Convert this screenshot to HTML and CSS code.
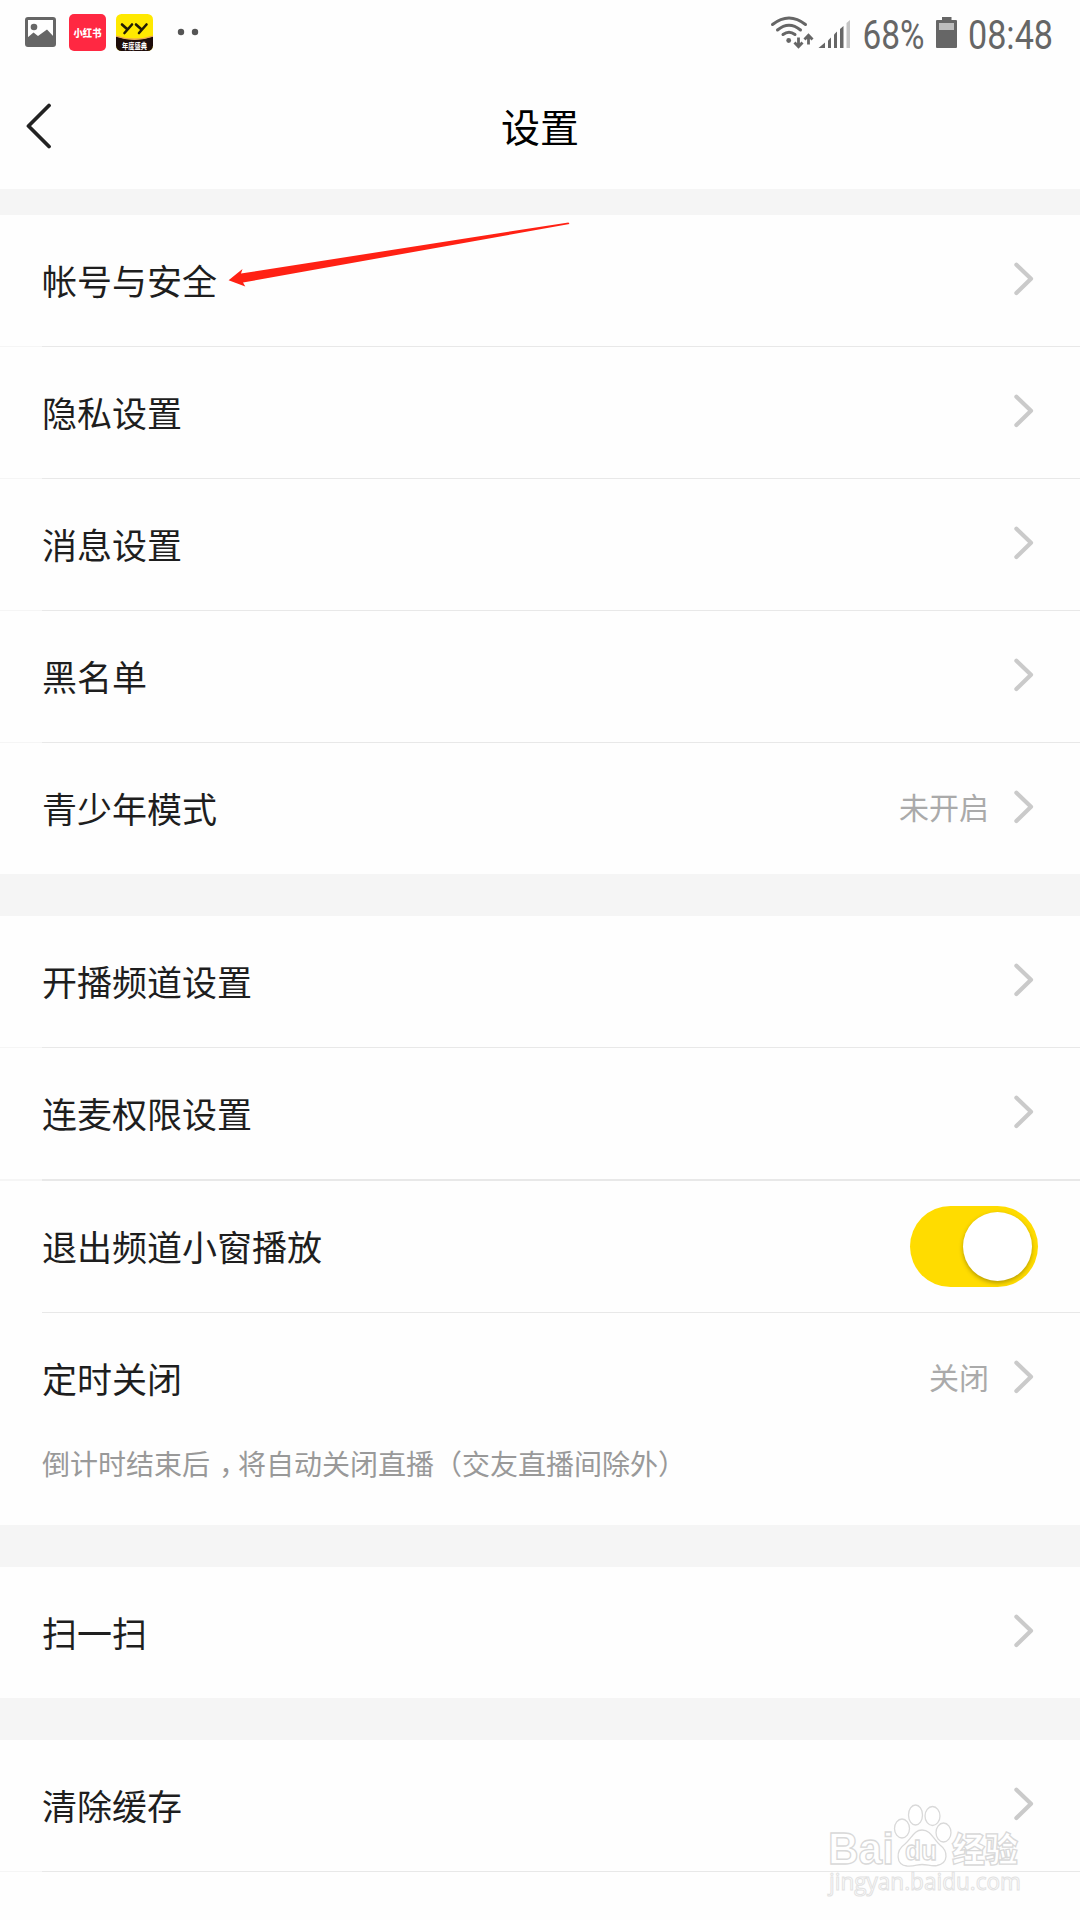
FILE: index.html
```
<!DOCTYPE html>
<html lang="zh-CN">
<head>
  <meta charset="UTF-8" />
  <meta name="viewport" content="width=device-width, initial-scale=1.0"/>
  <title>设置</title>
  <link rel="stylesheet" href="styles.css">
</head>
<body>
  <svg class="defs" width="0" height="0">
    <symbol id="chevron" viewBox="0 0 20 34">
      <path d="M2.4 2.8 L17 16.7 L2.4 31" fill="none" stroke="#cacaca" stroke-width="4.2" stroke-linecap="round" stroke-linejoin="round"/>
    </symbol>
  </svg>

  <div class="status-bar">
    <svg class="status-left" width="210" height="65" viewBox="0 0 210 65">
      <!-- gallery -->
      <rect x="26.5" y="18.5" width="28" height="27" rx="1.5" fill="none" stroke="#666" stroke-width="3"/>
      <circle cx="34" cy="27" r="3.3" fill="#666"/>
      <path d="M27 38 L33.5 32.5 L38 36 L47 29.5 L54 37 V46 H27 Z" fill="#666"/>
      <!-- xiaohongshu -->
      <rect x="69" y="14" width="37" height="37" rx="5" fill="#ff2842"/>
      <text class="red-text" x="87.5" y="36.5" textLength="28" lengthAdjust="spacingAndGlyphs">小红书</text>
      <!-- yy -->
      <clipPath id="yy"><rect x="116" y="14" width="37" height="37" rx="5.5"/></clipPath>
      <g clip-path="url(#yy)">
        <rect x="116" y="14" width="37" height="37" fill="#ffe900"/>
        <path d="M116 36.5 Q134.5 43 153 36.5 V51 H116 Z" fill="#1d0c0a"/>
        <path d="M116 36 Q134.5 42.5 153 36" fill="none" stroke="#e9a456" stroke-width="1.3"/>
        <path d="M122 24.5 L127 29 M132 24.5 L124.5 33 M136 24.5 L141 29 M146.5 24.5 L139 33" fill="none" stroke="#221d05" stroke-width="2.6" stroke-linecap="round"/>
        <text class="yy-text" x="134.5" y="48.5" textLength="25" lengthAdjust="spacingAndGlyphs">年度盛典</text>
      </g>
      <circle cx="181" cy="32" r="3.2" fill="#555"/>
      <circle cx="195" cy="32" r="3.2" fill="#555"/>
    </svg>
    <svg class="status-right" width="310" height="65" viewBox="770 0 310 65">
      <!-- wifi -->
      <g fill="none" stroke="#666" stroke-width="3" stroke-linecap="round">
        <path d="M772.5 24.5 Q789 11.500 805.5 24.500"/>
        <path d="M777.5 30 Q789 20.500 800.5 30"/>
        <path d="M783 34.5 Q789 30 795 34.5"/>
      </g>
      <circle cx="788.7" cy="40.5" r="2.4" fill="#666"/>
      <path d="M798.5 37.500 V46.5 M794.5 42.500 L798.5 46.800 L802.5 42.500 M808.5 44.500 V35.5 M804.5 39.500 L808.5 35.200 L812.5 39.500" fill="none" stroke="#666" stroke-width="2.8"/>
      <!-- signal -->
      <g fill="#666">
        <path d="M818.5 48 L825 42.5 V48 Z"/>
        <path d="M828 48 V40.5 L831 37.5 V48 Z"/>
        <path d="M834 48 V34.5 L837 31.5 V48 Z"/>
        <path d="M840 48 V29 L843.5 26 V48 Z"/>
      </g>
      <path d="M846.5 48 V23 L850 20 V48 Z" fill="#c4c4c4"/>
      <text class="status-text" x="862.5" y="48.5" textLength="62" lengthAdjust="spacingAndGlyphs">68%</text>
      <!-- battery -->
      <path d="M942 17 H951.5 V20 H956 Q957 20 957 21 V47 Q957 48 956 48 H937 Q936 48 936 47 V21 Q936 20 937 20 H942 Z" fill="#666"/>
      <rect x="939" y="23" width="15" height="7" fill="#bdbdbd"/>
      <text class="status-text" x="968" y="48.5" textLength="85" lengthAdjust="spacingAndGlyphs">08:48</text>
    </svg>
  </div>

  <div class="header">
    <svg class="back" width="26" height="46" viewBox="0 0 26 46">
      <path d="M23 2.5 L2.5 23 L23 43.5" fill="none" stroke="#222" stroke-width="3.8" stroke-linecap="round" stroke-linejoin="round"/>
    </svg>
    <h1>设置</h1>
  </div>

  <div class="group first">
    <div class="row"><span class="label">帐号与安全</span><svg class="chevron"><use href="#chevron"/></svg></div>
    <div class="line"></div>
    <div class="row"><span class="label">隐私设置</span><svg class="chevron"><use href="#chevron"/></svg></div>
    <div class="line"></div>
    <div class="row"><span class="label">消息设置</span><svg class="chevron"><use href="#chevron"/></svg></div>
    <div class="line"></div>
    <div class="row"><span class="label">黑名单</span><svg class="chevron"><use href="#chevron"/></svg></div>
    <div class="line"></div>
    <div class="row"><span class="label">青少年模式</span><span class="value">未开启</span><svg class="chevron"><use href="#chevron"/></svg></div>
  </div>

  <div class="group">
    <div class="row"><span class="label">开播频道设置</span><svg class="chevron"><use href="#chevron"/></svg></div>
    <div class="line"></div>
    <div class="row"><span class="label">连麦权限设置</span><svg class="chevron"><use href="#chevron"/></svg></div>
    <div class="line thick"></div>
    <div class="row"><span class="label">退出频道小窗播放</span><div class="switch"><div class="knob"></div></div></div>
    <div class="line inset"></div>
    <div class="row"><span class="label">定时关闭</span><span class="value">关闭</span><svg class="chevron"><use href="#chevron"/></svg></div>
    <p class="note">倒计时结束后<span class="comma">，</span>将自动关闭直播（交友直播间除外）</p>
  </div>

  <div class="group">
    <div class="row"><span class="label">扫一扫</span><svg class="chevron"><use href="#chevron"/></svg></div>
  </div>

  <div class="group last">
    <div class="row"><span class="label">清除缓存</span><svg class="chevron"><use href="#chevron"/></svg></div>
    <div class="line"></div>
  </div>

  <!-- pointer to the account row -->
  <svg class="arrow" width="350" height="70" viewBox="225 220 350 70">
    <path d="M228.6 280.3 L242.5 269 L241 273.5 L568.5 222.4 L569.5 224 L243 282.5 L245.3 286.5 Z" fill="#ff2114"/>
  </svg>

  <svg class="watermark" width="205" height="105" viewBox="824 1800 205 105">
    <g fill="#fff" stroke="#d9d9d9" stroke-width="1.3">
      <text class="wm-bold" x="828" y="1864" font-size="44" textLength="66" lengthAdjust="spacingAndGlyphs">Bai</text>
      <ellipse cx="902" cy="1828.5" rx="7.5" ry="9.5"/>
      <ellipse cx="915.5" cy="1815" rx="7" ry="10"/>
      <ellipse cx="932.5" cy="1816" rx="7.5" ry="9.5"/>
      <ellipse cx="943.5" cy="1832.5" rx="7.5" ry="9.5"/>
      <path d="M922 1830 C914 1830 912 1838 905 1844 C895 1851 896 1865 907 1866 C915 1866.500 917 1864.500 922 1864.500 C928 1864.500 931 1866.500 937 1865.500 C949 1863 948 1851 940 1845 C933 1839 931 1830 922 1830 Z"/>
      <text class="wm-bold thin" x="905" y="1860" font-size="27" textLength="32" lengthAdjust="spacingAndGlyphs">du</text>
      <text class="wm-cjk" x="952" y="1862" font-size="34" textLength="66" lengthAdjust="spacingAndGlyphs">经验</text>
      <text class="wm-url" x="829" y="1890" font-size="23" textLength="192" lengthAdjust="spacingAndGlyphs">jingyan.baidu.com</text>
    </g>
  </svg>
</body>
</html>
```
FILE: styles.css
```
body {
  margin: 0;
  position: relative;
  width: 1080px;
  height: 1920px;
  overflow: hidden;
  background-color: #fefefe;
  font-family: "Noto Sans CJK SC", sans-serif;
  color: #1e1e1e;
}
svg {
  display: block;
}
.defs {
  position: absolute;
}
.status-bar {
  display: flex;
  justify-content: space-between;
  height: 65px;
}
.status-text {
  font-family: Roboto, sans-serif;
  font-size: 40px;
  fill: #666;
}
.red-text {
  font-size: 10px;
  font-weight: 900;
  fill: #fff;
  text-anchor: middle;
}
.yy-text {
  font-size: 8px;
  font-weight: bold;
  fill: #fff;
  text-anchor: middle;
}
.header {
  display: grid;
  grid-template-columns: 80px 1fr 80px;
  align-items: center;
  height: 124px;
}
.back {
  margin: 0 0 2px 26px;
}
.header h1 {
  margin: 0 0 5px;
  font-size: 39px;
  font-weight: 400;
  line-height: 60px;
  text-align: center;
  color: #000;
}
.group {
  border-top: 42px solid #f5f5f5;
}
.group.first {
  border-top-width: 26px;
}
.row {
  display: flex;
  align-items: center;
  box-sizing: border-box;
  height: 131px;
  padding: 0 42px;
}
.label {
  flex: 1;
  margin-bottom: 2px;
  font-size: 35px;
  line-height: 52px;
}
.value {
  margin: 0 25px 6px 0;
  font-size: 30px;
  line-height: 44px;
  color: #aaa;
}
.chevron {
  width: 20px;
  height: 34px;
  margin: 0 4px 3px 0;
}
.line {
  height: 1px;
  background: linear-gradient(to right, #f5f5f5 42px, #e8e8e8 42px);
}
.line.thick {
  height: 2px;
}
.line.inset {
  margin-left: 42px;
  background: #e8e8e8;
}
.switch {
  display: flex;
  align-items: center;
  justify-content: flex-end;
  box-sizing: border-box;
  width: 128px;
  height: 81px;
  padding-right: 6px;
  border-radius: 41px;
  background-color: #ffdc00;
}
.knob {
  width: 69px;
  height: 69px;
  border-radius: 50%;
  background-color: #fff;
  box-shadow: 0 2px 4px rgba(90, 75, 0, 0.45);
}
.note {
  height: 81px;
  margin: 0;
  padding: 0 42px;
  font-size: 28px;
  line-height: 38px;
  color: #999;
}
/* half-width comma centred in a full-width cell */
.comma {
  margin: 0 5px 0 9px;
  font-feature-settings: "halt";
}
.arrow {
  position: absolute;
  left: 225px;
  top: 220px;
}
.watermark {
  position: absolute;
  left: 824px;
  top: 1800px;
}
.wm-bold {
  font-family: "Liberation Sans", sans-serif;
  font-weight: bold;
}
.wm-cjk {
  font-weight: 900;
}
.wm-url {
  font-family: "Open Sans", sans-serif;
  stroke: #e2e2e2;
  stroke-width: 1px;
}
```
